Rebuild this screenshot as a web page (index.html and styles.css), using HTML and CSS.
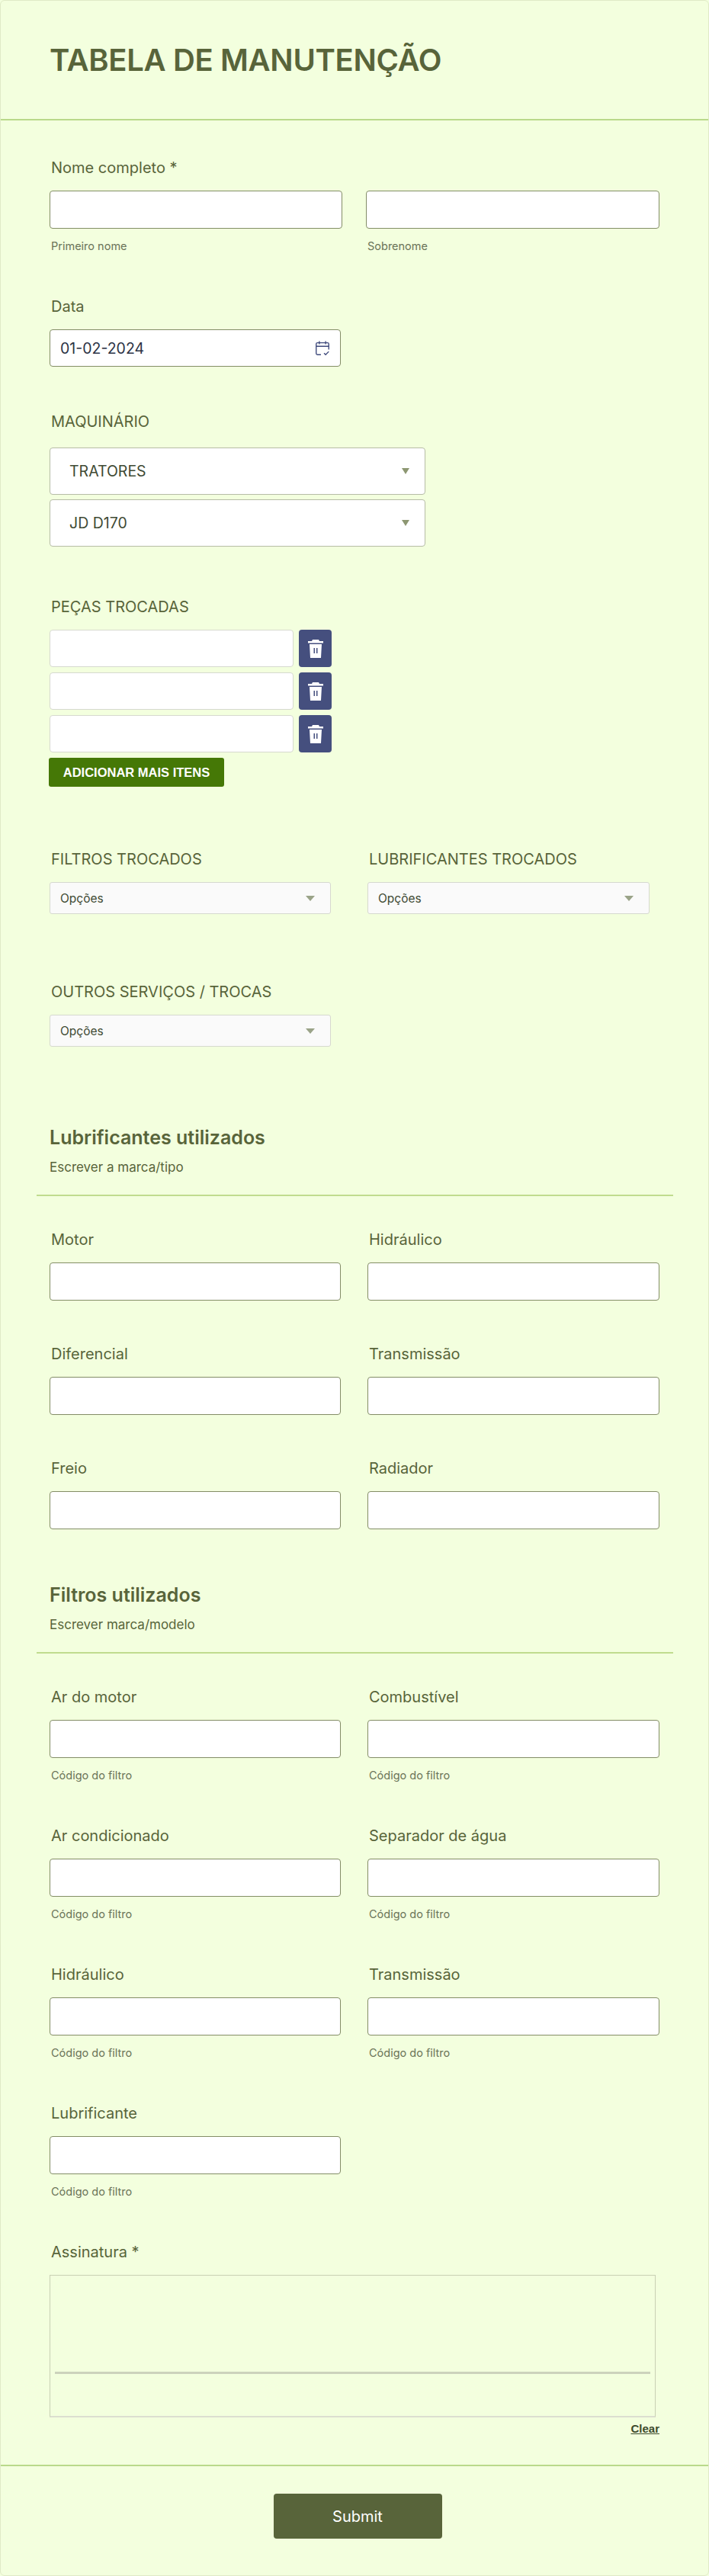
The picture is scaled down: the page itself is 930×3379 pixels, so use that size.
FILE: index.html
```html
<!DOCTYPE html>
<html lang="pt">
<head>
    <meta charset="UTF-8">
    <meta name="viewport" content="width=device-width, initial-scale=1.0">
    <title>Tabela de Manutenção</title>
    <link rel="stylesheet" href="styles.css">
</head>
<body>
    <form class="card">
        <header class="card-header">
            <h1>TABELA DE MANUTENÇÃO</h1>
        </header>

        <div class="card-body">
            <div class="field">
                <label class="label">Nome completo *</label>
                <div class="name-row">
                    <div>
                        <input type="text" class="input">
                        <p class="hint">Primeiro nome</p>
                    </div>
                    <div>
                        <input type="text" class="input">
                        <p class="hint">Sobrenome</p>
                    </div>
                </div>
            </div>

            <div class="field gap-data">
                <label class="label">Data</label>
                <div class="date-box">
                    <span>01-02-2024</span>
                    <svg class="date-icon" viewBox="0 0 16 16" fill="none" stroke="#3f4a7c" stroke-width="1">
                        <path d="M6.5 14H3.2A1.2 1.2 0 0 1 2 12.800V3.800A1.200 1.200 0 0 1 3.200 2.600H12.800A1.200 1.200 0 0 1 14 3.800V9"/>
                        <path d="M2 6H14M5 1V4M11 1V4M9.500 12.500L11 14L14 11"/>
                    </svg>
                </div>
            </div>

            <div class="field gap-maq">
                <label class="label label-wide">MAQUINÁRIO</label>
                <div class="big-select">
                    <span>TRATORES</span>
                    <i class="arrow-small"></i>
                </div>
                <div class="big-select">
                    <span>JD D170</span>
                    <i class="arrow-small"></i>
                </div>
            </div>

            <div class="field gap-pecas">
                <label class="label">PEÇAS TROCADAS</label>
                <div class="item-row">
                    <input type="text" class="input item-input">
                    <button type="button" class="trash-btn">
                        <svg viewBox="0 0 20 26" width="20" height="26" fill="#fff">
                            <path d="M6 1H14L15 3H20V5.500H0V3H5Z"/>
                            <path fill-rule="evenodd" d="M2 7H18L17 25H3ZM7.500 12V19H9V12ZM11 12V19H12.500V12Z"/>
                        </svg>
                    </button>
                </div>
                <div class="item-row">
                    <input type="text" class="input item-input">
                    <button type="button" class="trash-btn">
                        <svg viewBox="0 0 20 26" width="20" height="26" fill="#fff">
                            <path d="M6 1H14L15 3H20V5.500H0V3H5Z"/>
                            <path fill-rule="evenodd" d="M2 7H18L17 25H3ZM7.500 12V19H9V12ZM11 12V19H12.500V12Z"/>
                        </svg>
                    </button>
                </div>
                <div class="item-row">
                    <input type="text" class="input item-input">
                    <button type="button" class="trash-btn">
                        <svg viewBox="0 0 20 26" width="20" height="26" fill="#fff">
                            <path d="M6 1H14L15 3H20V5.500H0V3H5Z"/>
                            <path fill-rule="evenodd" d="M2 7H18L17 25H3ZM7.500 12V19H9V12ZM11 12V19H12.500V12Z"/>
                        </svg>
                    </button>
                </div>
                <button type="button" class="add-btn">ADICIONAR MAIS ITENS</button>
            </div>

            <div class="select-row gap-filtros">
                <div>
                    <label class="label">FILTROS TROCADOS</label>
                    <div class="small-select"><span>Opções</span><i class="arrow"></i></div>
                </div>
                <div>
                    <label class="label">LUBRIFICANTES TROCADOS</label>
                    <div class="small-select"><span>Opções</span><i class="arrow"></i></div>
                </div>
            </div>

            <div class="select-row gap-outros">
                <div>
                    <label class="label">OUTROS SERVIÇOS / TROCAS</label>
                    <div class="small-select"><span>Opções</span><i class="arrow"></i></div>
                </div>
            </div>

            <div class="section gap-lub">
                <h2>Lubrificantes utilizados</h2>
                <p>Escrever a marca/tipo</p>
            </div>

            <div class="grid">
                <div><label class="label">Motor</label><input type="text" class="input"></div>
                <div><label class="label">Hidráulico</label><input type="text" class="input"></div>
                <div><label class="label">Diferencial</label><input type="text" class="input"></div>
                <div><label class="label">Transmissão</label><input type="text" class="input"></div>
                <div><label class="label">Freio</label><input type="text" class="input"></div>
                <div><label class="label">Radiador</label><input type="text" class="input"></div>
            </div>

            <div class="section gap-fil">
                <h2>Filtros utilizados</h2>
                <p>Escrever marca/modelo</p>
            </div>

            <div class="grid grid-hints">
                <div><label class="label">Ar do motor</label><input type="text" class="input"><p class="hint">Código do filtro</p></div>
                <div><label class="label">Combustível</label><input type="text" class="input"><p class="hint">Código do filtro</p></div>
                <div><label class="label">Ar condicionado</label><input type="text" class="input"><p class="hint">Código do filtro</p></div>
                <div><label class="label">Separador de água</label><input type="text" class="input"><p class="hint">Código do filtro</p></div>
                <div><label class="label">Hidráulico</label><input type="text" class="input"><p class="hint">Código do filtro</p></div>
                <div><label class="label">Transmissão</label><input type="text" class="input"><p class="hint">Código do filtro</p></div>
                <div><label class="label">Lubrificante</label><input type="text" class="input"><p class="hint">Código do filtro</p></div>
            </div>

            <div class="field gap-sign">
                <label class="label">Assinatura *</label>
                <div class="sign-box"><div class="sign-line"></div></div>
                <div class="clear-row"><a href="#" class="clear">Clear</a></div>
            </div>
        </div>

        <footer class="card-footer">
            <button type="submit" class="submit-btn">Submit</button>
        </footer>
    </form>
</body>
</html>
```

FILE: styles.css
```css
* {
    box-sizing: border-box;
}
body {
    margin: 0;
    font-family: Inter, "Liberation Sans", sans-serif;
    background-color: #f3ffde;
    color: #58643a;
}
.card {
    height: 3379px;
    border: 1px solid #dfeac6;
    border-radius: 6px;
    background-color: #f3ffde;
}
.card-header {
    height: 157px;
    padding: 54px 64px 0;
    border-bottom: 2px solid #b9d98a;
}
h1 {
    margin: 0;
    font-size: 40px;
    line-height: 48px;
    font-weight: 600;
    letter-spacing: -0.35px;
}
.card-body {
    height: 3075px;
    padding: 52px 64px 0;
}
.label {
    display: block;
    height: 22px;
    margin: 0 0 18px 2px;
    font-size: 20px;
    line-height: 20px;
}
.label-wide {
    margin-bottom: 22px;
}
.input {
    display: block;
    width: 100%;
    height: 50px;
    border: 1px solid #838d66;
    border-radius: 4px;
    background-color: #fff;
}
.hint {
    margin: 15px 0 0 2px;
    font-size: 14.500px;
    line-height: 15px;
    color: #6a7358;
}
.name-row {
    display: grid;
    grid-template-columns: 384px 385px;
    column-gap: 31px;
}
.gap-data {
    margin-top: 62px;
}
.gap-maq {
    margin-top: 62px;
}
.gap-pecas {
    margin-top: 69px;
}
.gap-filtros {
    margin-top: 85px;
}
.gap-outros {
    margin-top: 92px;
}
.gap-lub {
    margin-top: 103px;
}
.gap-fil {
    margin-top: 70px;
}
.gap-sign {
    margin-top: 62px;
}
.date-box {
    display: flex;
    align-items: center;
    justify-content: space-between;
    width: 382px;
    height: 49px;
    padding: 0 12px 0 13px;
    border: 1px solid #838d66;
    border-radius: 4px;
    background-color: #fff;
    font-size: 19.500px;
    color: #2c3345;
}
.date-icon {
    width: 22px;
    height: 22px;
}
.big-select {
    display: flex;
    align-items: center;
    justify-content: space-between;
    width: 493px;
    height: 62px;
    margin-bottom: 6px;
    padding: 0 20px 0 25px;
    border: 1px solid #b6bca6;
    border-radius: 4px;
    background-color: #fff;
    font-size: 19.500px;
    color: #3f4a34;
}
.arrow-small {
    width: 0;
    height: 0;
    border-left: 5px solid transparent;
    border-right: 5px solid transparent;
    border-top: 8px solid #8d9772;
}
.item-row {
    display: flex;
    gap: 7px;
    height: 49px;
    margin-bottom: 7px;
}
.item-input {
    width: 320px;
    height: 49px;
    border: 1px solid #d6d9cf;
}
.trash-btn {
    display: flex;
    align-items: center;
    justify-content: center;
    width: 43px;
    height: 49px;
    padding: 0;
    border: none;
    border-radius: 4px;
    background-color: #454f7e;
}
.add-btn {
    display: block;
    width: 230px;
    height: 38px;
    margin-left: -1px;
    padding: 0;
    border: none;
    border-radius: 3px;
    background-color: #457806;
    color: #fff;
    font-family: "Liberation Sans", sans-serif;
    font-size: 16.500px;
    font-weight: 700;
}
.select-row {
    display: grid;
    grid-template-columns: 369px 370px;
    column-gap: 48px;
}
.small-select {
    display: flex;
    align-items: center;
    justify-content: space-between;
    height: 42px;
    padding: 0 20px 0 13px;
    border: 1px solid #d6d9cf;
    border-radius: 3px;
    background-color: #fafafa;
    font-size: 15.500px;
    color: #3f4a34;
}
.arrow {
    width: 0;
    height: 0;
    border-left: 6px solid transparent;
    border-right: 6px solid transparent;
    border-top: 7px solid #9aa388;
}
.section {
    height: 93px;
    margin-left: -17px;
    margin-right: -18px;
    padding-left: 17px;
    border-bottom: 2px solid #c0dc8e;
}
h2 {
    margin: 0 0 12px;
    font-size: 25px;
    line-height: 32px;
    font-weight: 600;
}
.section p {
    margin: 0;
    font-size: 17px;
    line-height: 22px;
}
.grid {
    display: grid;
    grid-template-columns: 382px 383px;
    column-gap: 35px;
    row-gap: 60px;
    margin-top: 47px;
}
.grid-hints {
    row-gap: 62px;
}
.sign-box {
    height: 187px;
    padding: 126px 6px 0;
    border: 1px solid #c8d0b4;
    border-bottom: 2px solid #dcdfd0;
    width: 795px;
}
.sign-line {
    height: 3px;
    background-color: #ccd2bc;
}
.clear-row {
    display: flex;
    justify-content: flex-end;
    padding-top: 6px;
}
.clear {
    font-family: "Liberation Sans", sans-serif;
    font-size: 15px;
    font-weight: 700;
    color: #3c4a2c;
}
.card-footer {
    padding-top: 36px;
    border-top: 2px solid #b9d98a;
    text-align: center;
}
.submit-btn {
    width: 221px;
    height: 59px;
    margin-left: 8px;
    border: none;
    border-radius: 4px;
    background-color: #58643a;
    color: #fff;
    font-family: Inter, sans-serif;
    font-size: 20px;
}
```
